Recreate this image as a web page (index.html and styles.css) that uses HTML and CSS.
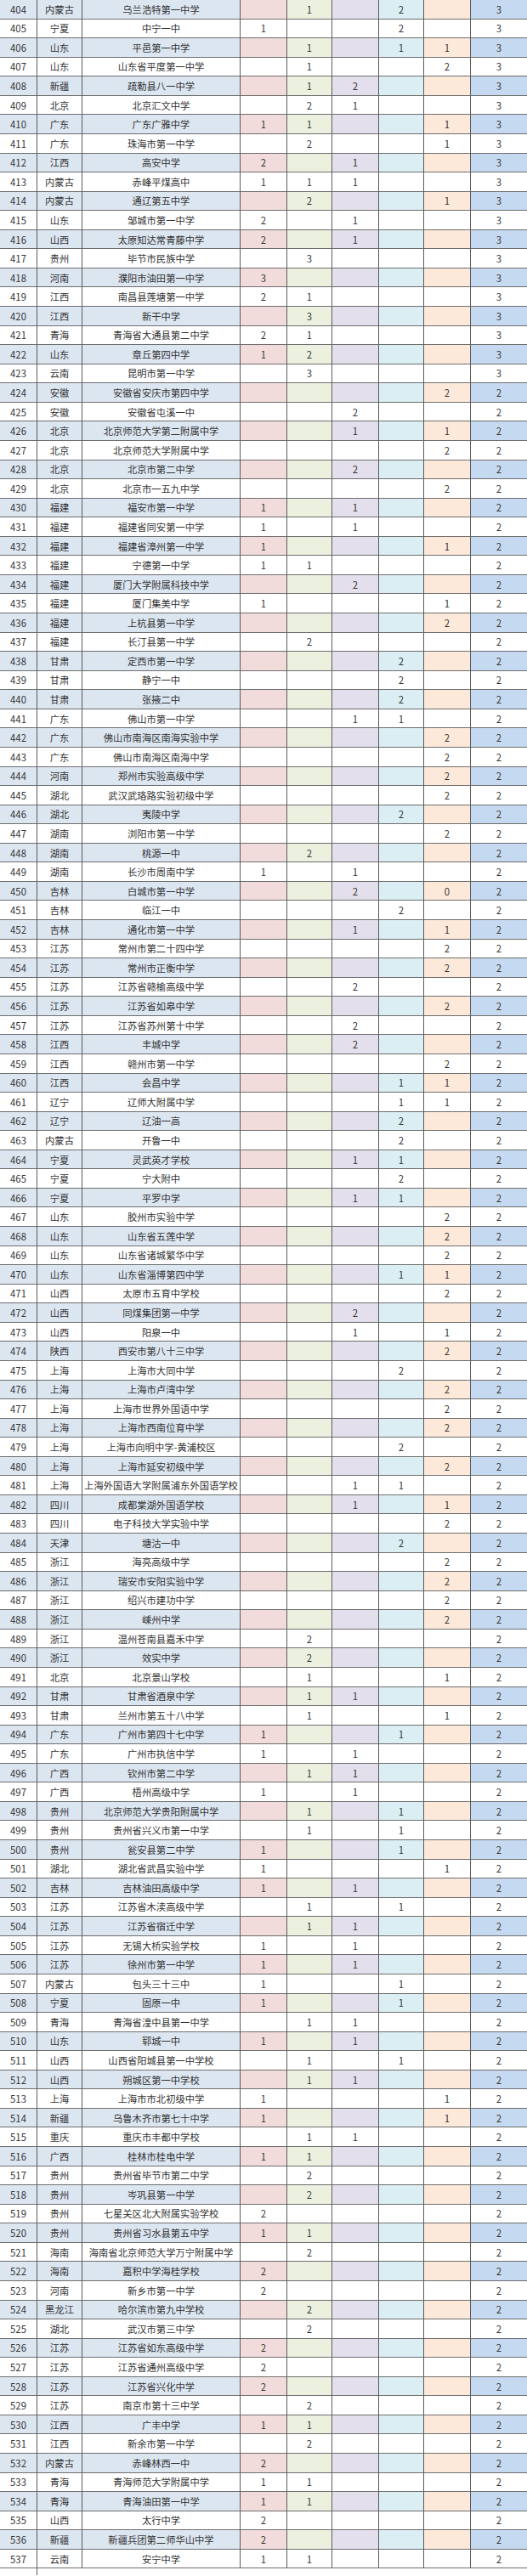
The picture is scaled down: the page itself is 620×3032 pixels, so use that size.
FILE: index.html
```html
<!DOCTYPE html>
<html lang="zh-CN">
<head>
<meta charset="utf-8">
<title>学校排名表</title>
<link rel="stylesheet" href="styles.css">
</head>
<body>
<table class="rank">
<colgroup>
<col class="c-no"><col class="c-prov"><col class="c-name"><col class="c-n"><col class="c-m"><col class="c-n"><col class="c-m"><col class="c-n"><col class="c-total">
</colgroup>
<tbody>
<tr><td>404</td><td>内蒙古</td><td>乌兰浩特第一中学</td><td></td><td>1</td><td></td><td>2</td><td></td><td>3</td></tr>
<tr><td>405</td><td>宁夏</td><td>中宁一中</td><td>1</td><td></td><td></td><td>2</td><td></td><td>3</td></tr>
<tr><td>406</td><td>山东</td><td>平邑第一中学</td><td></td><td>1</td><td></td><td>1</td><td>1</td><td>3</td></tr>
<tr><td>407</td><td>山东</td><td>山东省平度第一中学</td><td></td><td>1</td><td></td><td></td><td>2</td><td>3</td></tr>
<tr><td>408</td><td>新疆</td><td>疏勒县八一中学</td><td></td><td>1</td><td>2</td><td></td><td></td><td>3</td></tr>
<tr><td>409</td><td>北京</td><td>北京汇文中学</td><td></td><td>2</td><td>1</td><td></td><td></td><td>3</td></tr>
<tr><td>410</td><td>广东</td><td>广东广雅中学</td><td>1</td><td>1</td><td></td><td></td><td>1</td><td>3</td></tr>
<tr><td>411</td><td>广东</td><td>珠海市第一中学</td><td></td><td>2</td><td></td><td></td><td>1</td><td>3</td></tr>
<tr><td>412</td><td>江西</td><td>高安中学</td><td>2</td><td></td><td>1</td><td></td><td></td><td>3</td></tr>
<tr><td>413</td><td>内蒙古</td><td>赤峰平煤高中</td><td>1</td><td>1</td><td>1</td><td></td><td></td><td>3</td></tr>
<tr><td>414</td><td>内蒙古</td><td>通辽第五中学</td><td></td><td>2</td><td></td><td></td><td>1</td><td>3</td></tr>
<tr><td>415</td><td>山东</td><td>邹城市第一中学</td><td>2</td><td></td><td>1</td><td></td><td></td><td>3</td></tr>
<tr><td>416</td><td>山西</td><td>太原知达常青藤中学</td><td>2</td><td></td><td>1</td><td></td><td></td><td>3</td></tr>
<tr><td>417</td><td>贵州</td><td>毕节市民族中学</td><td></td><td>3</td><td></td><td></td><td></td><td>3</td></tr>
<tr><td>418</td><td>河南</td><td>濮阳市油田第一中学</td><td>3</td><td></td><td></td><td></td><td></td><td>3</td></tr>
<tr><td>419</td><td>江西</td><td>南昌县莲塘第一中学</td><td>2</td><td>1</td><td></td><td></td><td></td><td>3</td></tr>
<tr><td>420</td><td>江西</td><td>新干中学</td><td></td><td>3</td><td></td><td></td><td></td><td>3</td></tr>
<tr><td>421</td><td>青海</td><td>青海省大通县第二中学</td><td>2</td><td>1</td><td></td><td></td><td></td><td>3</td></tr>
<tr><td>422</td><td>山东</td><td>章丘第四中学</td><td>1</td><td>2</td><td></td><td></td><td></td><td>3</td></tr>
<tr><td>423</td><td>云南</td><td>昆明市第一中学</td><td></td><td>3</td><td></td><td></td><td></td><td>3</td></tr>
<tr><td>424</td><td>安徽</td><td>安徽省安庆市第四中学</td><td></td><td></td><td></td><td></td><td>2</td><td>2</td></tr>
<tr><td>425</td><td>安徽</td><td>安徽省屯溪一中</td><td></td><td></td><td>2</td><td></td><td></td><td>2</td></tr>
<tr><td>426</td><td>北京</td><td>北京师范大学第二附属中学</td><td></td><td></td><td>1</td><td></td><td>1</td><td>2</td></tr>
<tr><td>427</td><td>北京</td><td>北京师范大学附属中学</td><td></td><td></td><td></td><td></td><td>2</td><td>2</td></tr>
<tr><td>428</td><td>北京</td><td>北京市第二中学</td><td></td><td></td><td>2</td><td></td><td></td><td>2</td></tr>
<tr><td>429</td><td>北京</td><td>北京市一五九中学</td><td></td><td></td><td></td><td></td><td>2</td><td>2</td></tr>
<tr><td>430</td><td>福建</td><td>福安市第一中学</td><td>1</td><td></td><td>1</td><td></td><td></td><td>2</td></tr>
<tr><td>431</td><td>福建</td><td>福建省同安第一中学</td><td>1</td><td></td><td>1</td><td></td><td></td><td>2</td></tr>
<tr><td>432</td><td>福建</td><td>福建省漳州第一中学</td><td>1</td><td></td><td></td><td></td><td>1</td><td>2</td></tr>
<tr><td>433</td><td>福建</td><td>宁德第一中学</td><td>1</td><td>1</td><td></td><td></td><td></td><td>2</td></tr>
<tr><td>434</td><td>福建</td><td>厦门大学附属科技中学</td><td></td><td></td><td>2</td><td></td><td></td><td>2</td></tr>
<tr><td>435</td><td>福建</td><td>厦门集美中学</td><td>1</td><td></td><td></td><td></td><td>1</td><td>2</td></tr>
<tr><td>436</td><td>福建</td><td>上杭县第一中学</td><td></td><td></td><td></td><td></td><td>2</td><td>2</td></tr>
<tr><td>437</td><td>福建</td><td>长汀县第一中学</td><td></td><td>2</td><td></td><td></td><td></td><td>2</td></tr>
<tr><td>438</td><td>甘肃</td><td>定西市第一中学</td><td></td><td></td><td></td><td>2</td><td></td><td>2</td></tr>
<tr><td>439</td><td>甘肃</td><td>静宁一中</td><td></td><td></td><td></td><td>2</td><td></td><td>2</td></tr>
<tr><td>440</td><td>甘肃</td><td>张掖二中</td><td></td><td></td><td></td><td>2</td><td></td><td>2</td></tr>
<tr><td>441</td><td>广东</td><td>佛山市第一中学</td><td></td><td></td><td>1</td><td>1</td><td></td><td>2</td></tr>
<tr><td>442</td><td>广东</td><td>佛山市南海区南海实验中学</td><td></td><td></td><td></td><td></td><td>2</td><td>2</td></tr>
<tr><td>443</td><td>广东</td><td>佛山市南海区南海中学</td><td></td><td></td><td></td><td></td><td>2</td><td>2</td></tr>
<tr><td>444</td><td>河南</td><td>郑州市实验高级中学</td><td></td><td></td><td></td><td></td><td>2</td><td>2</td></tr>
<tr><td>445</td><td>湖北</td><td>武汉武珞路实验初级中学</td><td></td><td></td><td></td><td></td><td>2</td><td>2</td></tr>
<tr><td>446</td><td>湖北</td><td>夷陵中学</td><td></td><td></td><td></td><td>2</td><td></td><td>2</td></tr>
<tr><td>447</td><td>湖南</td><td>浏阳市第一中学</td><td></td><td></td><td></td><td></td><td>2</td><td>2</td></tr>
<tr><td>448</td><td>湖南</td><td>桃源一中</td><td></td><td>2</td><td></td><td></td><td></td><td>2</td></tr>
<tr><td>449</td><td>湖南</td><td>长沙市周南中学</td><td>1</td><td></td><td>1</td><td></td><td></td><td>2</td></tr>
<tr><td>450</td><td>吉林</td><td>白城市第一中学</td><td></td><td></td><td>2</td><td></td><td>0</td><td>2</td></tr>
<tr><td>451</td><td>吉林</td><td>临江一中</td><td></td><td></td><td></td><td>2</td><td></td><td>2</td></tr>
<tr><td>452</td><td>吉林</td><td>通化市第一中学</td><td></td><td></td><td>1</td><td></td><td>1</td><td>2</td></tr>
<tr><td>453</td><td>江苏</td><td>常州市第二十四中学</td><td></td><td></td><td></td><td></td><td>2</td><td>2</td></tr>
<tr><td>454</td><td>江苏</td><td>常州市正衡中学</td><td></td><td></td><td></td><td></td><td>2</td><td>2</td></tr>
<tr><td>455</td><td>江苏</td><td>江苏省赣榆高级中学</td><td></td><td></td><td>2</td><td></td><td></td><td>2</td></tr>
<tr><td>456</td><td>江苏</td><td>江苏省如皋中学</td><td></td><td></td><td></td><td></td><td>2</td><td>2</td></tr>
<tr><td>457</td><td>江苏</td><td>江苏省苏州第十中学</td><td></td><td></td><td>2</td><td></td><td></td><td>2</td></tr>
<tr><td>458</td><td>江西</td><td>丰城中学</td><td></td><td></td><td>2</td><td></td><td></td><td>2</td></tr>
<tr><td>459</td><td>江西</td><td>赣州市第一中学</td><td></td><td></td><td></td><td></td><td>2</td><td>2</td></tr>
<tr><td>460</td><td>江西</td><td>会昌中学</td><td></td><td></td><td></td><td>1</td><td>1</td><td>2</td></tr>
<tr><td>461</td><td>辽宁</td><td>辽师大附属中学</td><td></td><td></td><td></td><td>1</td><td>1</td><td>2</td></tr>
<tr><td>462</td><td>辽宁</td><td>辽油一高</td><td></td><td></td><td></td><td>2</td><td></td><td>2</td></tr>
<tr><td>463</td><td>内蒙古</td><td>开鲁一中</td><td></td><td></td><td></td><td>2</td><td></td><td>2</td></tr>
<tr><td>464</td><td>宁夏</td><td>灵武英才学校</td><td></td><td></td><td>1</td><td>1</td><td></td><td>2</td></tr>
<tr><td>465</td><td>宁夏</td><td>宁大附中</td><td></td><td></td><td></td><td>2</td><td></td><td>2</td></tr>
<tr><td>466</td><td>宁夏</td><td>平罗中学</td><td></td><td></td><td>1</td><td>1</td><td></td><td>2</td></tr>
<tr><td>467</td><td>山东</td><td>胶州市实验中学</td><td></td><td></td><td></td><td></td><td>2</td><td>2</td></tr>
<tr><td>468</td><td>山东</td><td>山东省五莲中学</td><td></td><td></td><td></td><td></td><td>2</td><td>2</td></tr>
<tr><td>469</td><td>山东</td><td>山东省诸城繁华中学</td><td></td><td></td><td></td><td></td><td>2</td><td>2</td></tr>
<tr><td>470</td><td>山东</td><td>山东省淄博第四中学</td><td></td><td></td><td></td><td>1</td><td>1</td><td>2</td></tr>
<tr><td>471</td><td>山西</td><td>太原市五育中学校</td><td></td><td></td><td></td><td></td><td>2</td><td>2</td></tr>
<tr><td>472</td><td>山西</td><td>同煤集团第一中学</td><td></td><td></td><td>2</td><td></td><td></td><td>2</td></tr>
<tr><td>473</td><td>山西</td><td>阳泉一中</td><td></td><td></td><td>1</td><td></td><td>1</td><td>2</td></tr>
<tr><td>474</td><td>陕西</td><td>西安市第八十三中学</td><td></td><td></td><td></td><td></td><td>2</td><td>2</td></tr>
<tr><td>475</td><td>上海</td><td>上海市大同中学</td><td></td><td></td><td></td><td>2</td><td></td><td>2</td></tr>
<tr><td>476</td><td>上海</td><td>上海市卢湾中学</td><td></td><td></td><td></td><td></td><td>2</td><td>2</td></tr>
<tr><td>477</td><td>上海</td><td>上海市世界外国语中学</td><td></td><td></td><td></td><td></td><td>2</td><td>2</td></tr>
<tr><td>478</td><td>上海</td><td>上海市西南位育中学</td><td></td><td></td><td></td><td></td><td>2</td><td>2</td></tr>
<tr><td>479</td><td>上海</td><td>上海市向明中学-黄浦校区</td><td></td><td></td><td></td><td>2</td><td></td><td>2</td></tr>
<tr><td>480</td><td>上海</td><td>上海市延安初级中学</td><td></td><td></td><td></td><td></td><td>2</td><td>2</td></tr>
<tr><td>481</td><td>上海</td><td>上海外国语大学附属浦东外国语学校</td><td></td><td></td><td>1</td><td>1</td><td></td><td>2</td></tr>
<tr><td>482</td><td>四川</td><td>成都棠湖外国语学校</td><td></td><td></td><td>1</td><td></td><td>1</td><td>2</td></tr>
<tr><td>483</td><td>四川</td><td>电子科技大学实验中学</td><td></td><td></td><td></td><td></td><td>2</td><td>2</td></tr>
<tr><td>484</td><td>天津</td><td>塘沽一中</td><td></td><td></td><td></td><td>2</td><td></td><td>2</td></tr>
<tr><td>485</td><td>浙江</td><td>海亮高级中学</td><td></td><td></td><td></td><td></td><td>2</td><td>2</td></tr>
<tr><td>486</td><td>浙江</td><td>瑞安市安阳实验中学</td><td></td><td></td><td></td><td></td><td>2</td><td>2</td></tr>
<tr><td>487</td><td>浙江</td><td>绍兴市建功中学</td><td></td><td></td><td></td><td></td><td>2</td><td>2</td></tr>
<tr><td>488</td><td>浙江</td><td>嵊州中学</td><td></td><td></td><td></td><td></td><td>2</td><td>2</td></tr>
<tr><td>489</td><td>浙江</td><td>温州苍南县嘉禾中学</td><td></td><td>2</td><td></td><td></td><td></td><td>2</td></tr>
<tr><td>490</td><td>浙江</td><td>效实中学</td><td></td><td>2</td><td></td><td></td><td></td><td>2</td></tr>
<tr><td>491</td><td>北京</td><td>北京景山学校</td><td></td><td>1</td><td></td><td></td><td>1</td><td>2</td></tr>
<tr><td>492</td><td>甘肃</td><td>甘肃省酒泉中学</td><td></td><td>1</td><td>1</td><td></td><td></td><td>2</td></tr>
<tr><td>493</td><td>甘肃</td><td>兰州市第五十八中学</td><td></td><td>1</td><td></td><td></td><td>1</td><td>2</td></tr>
<tr><td>494</td><td>广东</td><td>广州市第四十七中学</td><td>1</td><td></td><td></td><td>1</td><td></td><td>2</td></tr>
<tr><td>495</td><td>广东</td><td>广州市执信中学</td><td>1</td><td></td><td>1</td><td></td><td></td><td>2</td></tr>
<tr><td>496</td><td>广西</td><td>钦州市第二中学</td><td></td><td>1</td><td>1</td><td></td><td></td><td>2</td></tr>
<tr><td>497</td><td>广西</td><td>梧州高级中学</td><td>1</td><td></td><td>1</td><td></td><td></td><td>2</td></tr>
<tr><td>498</td><td>贵州</td><td>北京师范大学贵阳附属中学</td><td></td><td>1</td><td></td><td>1</td><td></td><td>2</td></tr>
<tr><td>499</td><td>贵州</td><td>贵州省兴义市第一中学</td><td></td><td>1</td><td></td><td>1</td><td></td><td>2</td></tr>
<tr><td>500</td><td>贵州</td><td>瓮安县第二中学</td><td>1</td><td></td><td></td><td>1</td><td></td><td>2</td></tr>
<tr><td>501</td><td>湖北</td><td>湖北省武昌实验中学</td><td>1</td><td></td><td></td><td></td><td>1</td><td>2</td></tr>
<tr><td>502</td><td>吉林</td><td>吉林油田高级中学</td><td>1</td><td></td><td>1</td><td></td><td></td><td>2</td></tr>
<tr><td>503</td><td>江苏</td><td>江苏省木渎高级中学</td><td></td><td>1</td><td></td><td>1</td><td></td><td>2</td></tr>
<tr><td>504</td><td>江苏</td><td>江苏省宿迁中学</td><td></td><td>1</td><td>1</td><td></td><td></td><td>2</td></tr>
<tr><td>505</td><td>江苏</td><td>无锡大桥实验学校</td><td>1</td><td></td><td>1</td><td></td><td></td><td>2</td></tr>
<tr><td>506</td><td>江苏</td><td>徐州市第一中学</td><td>1</td><td></td><td>1</td><td></td><td></td><td>2</td></tr>
<tr><td>507</td><td>内蒙古</td><td>包头三十三中</td><td>1</td><td></td><td></td><td>1</td><td></td><td>2</td></tr>
<tr><td>508</td><td>宁夏</td><td>固原一中</td><td>1</td><td></td><td></td><td>1</td><td></td><td>2</td></tr>
<tr><td>509</td><td>青海</td><td>青海省湟中县第一中学</td><td></td><td>1</td><td>1</td><td></td><td></td><td>2</td></tr>
<tr><td>510</td><td>山东</td><td>郓城一中</td><td>1</td><td></td><td>1</td><td></td><td></td><td>2</td></tr>
<tr><td>511</td><td>山西</td><td>山西省阳城县第一中学校</td><td></td><td>1</td><td></td><td>1</td><td></td><td>2</td></tr>
<tr><td>512</td><td>山西</td><td>朔城区第一中学校</td><td></td><td>1</td><td>1</td><td></td><td></td><td>2</td></tr>
<tr><td>513</td><td>上海</td><td>上海市市北初级中学</td><td>1</td><td></td><td></td><td></td><td>1</td><td>2</td></tr>
<tr><td>514</td><td>新疆</td><td>乌鲁木齐市第七十中学</td><td>1</td><td></td><td></td><td></td><td>1</td><td>2</td></tr>
<tr><td>515</td><td>重庆</td><td>重庆市丰都中学校</td><td></td><td>1</td><td>1</td><td></td><td></td><td>2</td></tr>
<tr><td>516</td><td>广西</td><td>桂林市桂电中学</td><td>1</td><td>1</td><td></td><td></td><td></td><td>2</td></tr>
<tr><td>517</td><td>贵州</td><td>贵州省毕节市第二中学</td><td></td><td>2</td><td></td><td></td><td></td><td>2</td></tr>
<tr><td>518</td><td>贵州</td><td>岑巩县第一中学</td><td></td><td>2</td><td></td><td></td><td></td><td>2</td></tr>
<tr><td>519</td><td>贵州</td><td>七星关区北大附属实验学校</td><td>2</td><td></td><td></td><td></td><td></td><td>2</td></tr>
<tr><td>520</td><td>贵州</td><td>贵州省习水县第五中学</td><td>1</td><td>1</td><td></td><td></td><td></td><td>2</td></tr>
<tr><td>521</td><td>海南</td><td>海南省北京师范大学万宁附属中学</td><td></td><td>2</td><td></td><td></td><td></td><td>2</td></tr>
<tr><td>522</td><td>海南</td><td>嘉积中学海桂学校</td><td>2</td><td></td><td></td><td></td><td></td><td>2</td></tr>
<tr><td>523</td><td>河南</td><td>新乡市第一中学</td><td>2</td><td></td><td></td><td></td><td></td><td>2</td></tr>
<tr><td>524</td><td>黑龙江</td><td>哈尔滨市第九中学校</td><td></td><td>2</td><td></td><td></td><td></td><td>2</td></tr>
<tr><td>525</td><td>湖北</td><td>武汉市第三中学</td><td></td><td>2</td><td></td><td></td><td></td><td>2</td></tr>
<tr><td>526</td><td>江苏</td><td>江苏省如东高级中学</td><td>2</td><td></td><td></td><td></td><td></td><td>2</td></tr>
<tr><td>527</td><td>江苏</td><td>江苏省通州高级中学</td><td>2</td><td></td><td></td><td></td><td></td><td>2</td></tr>
<tr><td>528</td><td>江苏</td><td>江苏省兴化中学</td><td>2</td><td></td><td></td><td></td><td></td><td>2</td></tr>
<tr><td>529</td><td>江苏</td><td>南京市第十三中学</td><td></td><td>2</td><td></td><td></td><td></td><td>2</td></tr>
<tr><td>530</td><td>江西</td><td>广丰中学</td><td>1</td><td>1</td><td></td><td></td><td></td><td>2</td></tr>
<tr><td>531</td><td>江西</td><td>新余市第一中学</td><td></td><td>2</td><td></td><td></td><td></td><td>2</td></tr>
<tr><td>532</td><td>内蒙古</td><td>赤峰林西一中</td><td>2</td><td></td><td></td><td></td><td></td><td>2</td></tr>
<tr><td>533</td><td>青海</td><td>青海师范大学附属中学</td><td>1</td><td>1</td><td></td><td></td><td></td><td>2</td></tr>
<tr><td>534</td><td>青海</td><td>青海油田第一中学</td><td>1</td><td>1</td><td></td><td></td><td></td><td>2</td></tr>
<tr><td>535</td><td>山西</td><td>太行中学</td><td>2</td><td></td><td></td><td></td><td></td><td>2</td></tr>
<tr><td>536</td><td>新疆</td><td>新疆兵团第二师华山中学</td><td>2</td><td></td><td></td><td></td><td></td><td>2</td></tr>
<tr><td>537</td><td>云南</td><td>安宁中学</td><td>1</td><td>1</td><td></td><td></td><td></td><td>2</td></tr>
</tbody>
</table>
<div class="tail"><div class="tail-no"></div></div>
</body>
</html>
```
FILE: styles.css
```css
html, body {
  margin: 0;
  padding: 0;
  background: #ffffff;
}

body {
  width: 620px;
  font-family: "Noto Sans CJK SC", "Noto Sans", sans-serif;
  font-size: 11.3px;
  color: #333333;
}

.rank {
  width: 620px;
  table-layout: fixed;
  border-collapse: separate;
  border-spacing: 0;
}

.c-no { width: 44px; }
.c-prov { width: 53px; }
.c-name { width: 186px; }
.c-n { width: 55px; }
.c-m { width: 53px; }
.c-total { width: 66px; }

.rank tr {
  height: 22.57px;
}

.rank td {
  padding: 0;
  text-align: center;
  vertical-align: middle;
  white-space: nowrap;
  overflow: hidden;
  line-height: 14px;
  border-right: 1px solid #5a5a5a;
  border-bottom: 1px solid #6e6e6e;
  box-sizing: border-box;
}

.rank td:last-child {
  border-right: none;
}

.rank tr:nth-child(odd) td:nth-child(1),
.rank tr:nth-child(odd) td:nth-child(2),
.rank tr:nth-child(odd) td:nth-child(3) {
  background: #dce6f1;
}

.rank tr:nth-child(odd) td:nth-child(4) { background: #f2dcdb; }
.rank tr:nth-child(odd) td:nth-child(5) { background: #ebf1de; }
.rank tr:nth-child(odd) td:nth-child(6) { background: #e4dfec; }
.rank tr:nth-child(odd) td:nth-child(7) { background: #daeef3; }
.rank tr:nth-child(odd) td:nth-child(8) { background: #fde9d9; }
.rank tr:nth-child(odd) td:nth-child(9) { background: #c5d9f1; }

.tail {
  height: 8px;
  display: flex;
}

.tail-no {
  width: 44px;
  border-right: 1px solid #5a5a5a;
  box-sizing: border-box;
}
```
